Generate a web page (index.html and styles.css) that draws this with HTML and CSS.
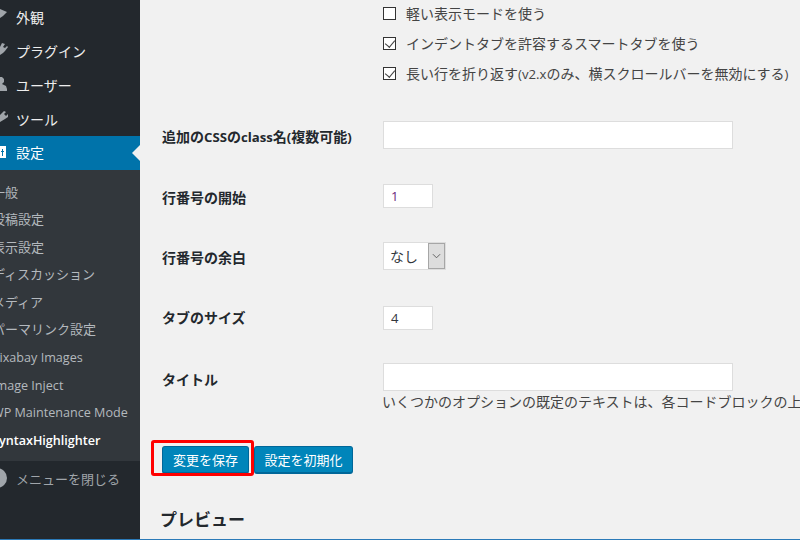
FILE: index.html
```html
<!DOCTYPE html>
<html lang="ja">
<head>
<meta charset="utf-8">
<title>SyntaxHighlighter</title>
<link rel="stylesheet" href="styles.css">
</head>
<body>
<div class="page">
  <nav class="side">
    <ul class="menu">
      <li class="item"><svg class="ico" viewBox="0 0 8 20"><path d="M0 2 L7 5 L3 9 L0 11Z"/></svg><span>外観</span></li>
      <li class="item"><svg class="ico" viewBox="0 0 8 20"><path d="M2 2l3 1-2 3 2 1 2-2 1 1-3 4-2 2-3 2V6z"/></svg><span>プラグイン</span></li>
      <li class="item"><svg class="ico" viewBox="0 0 8 20"><path d="M0 2h2l2 2v3l-2 2 4 2 1 3v2H0z"/></svg><span>ユーザー</span></li>
      <li class="item"><svg class="ico" viewBox="0 0 8 20"><path d="M4 2l2 1-2 2 2 2 2-2v3l-3 2-5 3V6z"/></svg><span>ツール</span></li>
      <li class="item active"><svg class="ico white" viewBox="0 0 8 20"><path d="M0 3h6v12H0zM2 6v2H1v1h1v4h1V9h1V8H3V6z" fill-rule="evenodd"/></svg><span>設定</span></li>
    </ul>
    <ul class="sub">
      <li>一般</li>
      <li>投稿設定</li>
      <li>表示設定</li>
      <li>ディスカッション</li>
      <li>メディア</li>
      <li>パーマリンク設定</li>
      <li class="latin">Pixabay Images</li>
      <li class="latin">Image Inject</li>
      <li class="latin">WP Maintenance Mode</li>
      <li class="latin current">SyntaxHighlighter</li>
    </ul>
    <div class="collapse"><span class="disc"></span><span>メニューを閉じる</span></div>
  </nav>
  <main class="main">
    <div class="form">
      <div class="row checks">
        <div class="label"></div>
        <div class="ctl">
          <label class="chk"><span class="box"></span>軽い表示モードを使う</label>
          <label class="chk"><span class="box on"></span>インデントタブを許容するスマートタブを使う</label>
          <label class="chk"><span class="box on"></span><span>長い行を折り返す<span class="lat">(v2.x</span>のみ、横スクロールバーを無効にする<span class="lat">)</span></span></label>
        </div>
      </div>
      <div class="row r-class">
        <div class="label">追加の<span class="lat">CSS</span>の<span class="lat">class</span>名<span class="lat">(</span>複数可能<span class="lat">)</span></div>
        <div class="ctl"><span class="field wide"></span></div>
      </div>
      <div class="row r-start">
        <div class="label">行番号の開始</div>
        <div class="ctl"><span class="field num purple">1</span></div>
      </div>
      <div class="row r-pad">
        <div class="label">行番号の余白</div>
        <div class="ctl"><span class="select"><span class="sel-text">なし</span><span class="sel-btn"><svg viewBox="0 0 10 6" class="chev"><path d="M1 1l4 4 4-4"/></svg></span></span></div>
      </div>
      <div class="row r-tab">
        <div class="label">タブのサイズ</div>
        <div class="ctl"><span class="field num">4</span></div>
      </div>
      <div class="row r-title">
        <div class="label">タイトル</div>
        <div class="ctl">
          <span class="field wide"></span>
          <p class="desc">いくつかのオプションの既定のテキストは、各コードブロックの上に表示されます。</p>
        </div>
      </div>
    </div>
    <div class="actions">
      <button class="btn">変更を保存</button>
      <button class="btn second">設定を初期化</button>
      <span class="redbox"></span>
    </div>
    <h2 class="preview">プレビュー</h2>
  </main>
</div>
<div class="bottomline"></div>
</body>
</html>
```
FILE: styles.css
```css
* { box-sizing: border-box; }
html, body { margin: 0; padding: 0; }
body {
  width: 800px; height: 540px; overflow: hidden; position: relative;
  background: #f1f1f1; color: #444;
  font-family: "Open Sans", "Noto Sans CJK JP", sans-serif;
  font-size: 14px;
}
ul { list-style: none; margin: 0; padding: 0; }
.page { display: flex; width: 800px; height: 540px; overflow: hidden; }
.side { width: 140px; flex: none; background: #23282d; color: #eee; overflow: hidden; }
.item { height: 34px; display: flex; align-items: center; gap: 8px; font-size: 14px; color: #eee; }
.item span { line-height: 34px; padding-top: 2px; }
.ico { width: 8px; height: 20px; flex: none; fill: #a0a5aa; }
.ico.white { fill: #fff; }
.item.active { background: #0073aa; color: #fff; position: relative; }
.item.active span { padding-top: 0; }
.item.active::after {
  content: ""; position: absolute; right: 0; top: 9px;
  border: 8px solid transparent; border-right-color: #f1f1f1; border-left-width: 0;
}
.sub { background: #32373c; height: 291px; padding-top: 8px; }
.sub li { height: 27.4px; line-height: 28px; font-size: 13px; margin-left: -8px; color: #b4b9be; white-space: nowrap; }
.sub li.latin { font-size: 12.6px; line-height: 31px; }
.sub li.current { color: #fff; font-weight: 600; }
.collapse { display: flex; align-items: center; gap: 9px; height: 34px; color: #a0a5aa; font-size: 13px; margin-left: -13px; }
.disc { width: 20px; height: 20px; border-radius: 50%; background: #a0a5aa; flex: none; }
.main { flex: 1; min-width: 0; padding-left: 22px; overflow: hidden; }
.form { display: flex; flex-direction: column; margin-top: -2px; }
.row { display: flex; width: 900px; }
.label { width: 221px; flex: none; font-weight: 700; color: #23282d; font-size: 14px; white-space: nowrap; }
.lat { font-size: 13.2px; }
.ctl { flex: 1; min-width: 0; }
.checks { height: 123px; }
.chk { display: flex; align-items: center; height: 30px; white-space: nowrap; font-size: 14px; color: #444; }
.box { width: 13px; height: 13px; border: 1px solid #333; background: #fff; margin-right: 10px; flex: none; }
.box.on { position: relative; }
.box.on::after { content: ""; position: absolute; left: 3px; top: 0; width: 5px; height: 8px; border: solid #444; border-width: 0 1.5px 1.5px 0; transform: rotate(40deg); }
.field { display: flex; align-items: center; background: #fff; border: 1px solid #ddd; height: 28px; }
.wide { width: 350px; }
.num { width: 50px; height: 24px; padding-left: 7px; color: #32373c; font-size: 13px; }
.purple { color: #6b1f7c; }
.r-class { height: 63px; align-items: flex-start; }
.r-class .label { line-height: 32px; }
.r-start { height: 58px; }
.r-start .label { line-height: 28px; }
.r-pad { height: 64px; }
.r-pad .label { line-height: 32px; }
.r-tab { height: 57px; }
.r-tab .label { line-height: 24px; }
.r-title { height: 83px; }
.r-title .label { line-height: 34px; }
.select { display: flex; width: 63px; height: 28px; background: #fff; border: 1px solid #ddd; }
.sel-text { flex: 1; padding-left: 6px; line-height: 28px; font-size: 14px; color: #32373c; }
.sel-btn { width: 17px; background: #ddd; border: 1px solid #a6a6a6; display: flex; align-items: center; justify-content: center; }
.chev { width: 9px; height: 6px; fill: none; stroke: #555; stroke-width: 1; }
.desc { margin: 0 0 0 -1px; line-height: 22px; font-size: 14px; white-space: nowrap; color: #444; }
.actions { display: flex; gap: 5px; position: relative; width: 300px; }
.btn { height: 28px; padding: 0 10px; background: #0085ba; border: 1px solid #006799; border-bottom-width: 2px; border-radius: 3px; color: #fff; font: inherit; font-size: 13px; line-height: 24px; white-space: nowrap; }
.second { padding: 0 9.5px; }
.redbox { position: absolute; left: -11px; top: -6px; width: 103px; height: 36px; border: 3px solid #f00; border-radius: 3px; }
.preview { margin: 33px 0 0 -2px; font-size: 17px; font-weight: 700; color: #23282d; line-height: 26px; }
.bottomline { position: absolute; left: 0; bottom: 0; width: 800px; height: 1px; background: #2b7ab8; }
```
